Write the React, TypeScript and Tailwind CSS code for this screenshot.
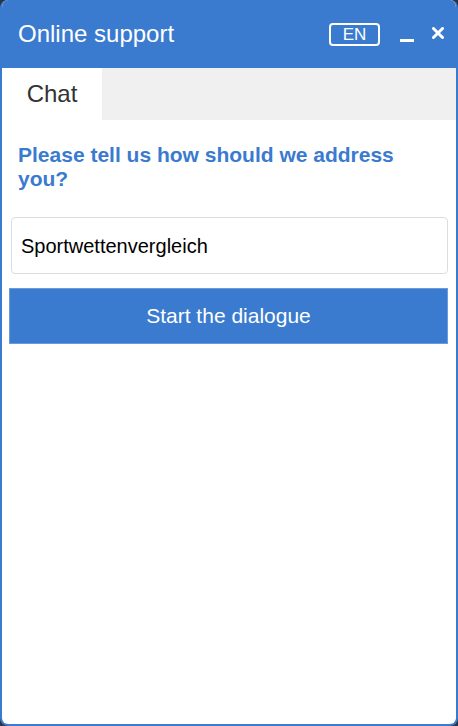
export default function App() {
  return (
    <div className="w-[458px] h-[726px] bg-[#2b3442]" style={{ fontFamily: '"Liberation Sans", Arial, sans-serif' }}>
      <div className="flex h-full flex-col overflow-hidden rounded-[8px] border-2 border-t-0 border-[#3a7bcf] bg-white">
        <div className="flex h-[68px] shrink-0 items-center bg-[#3a7bcf] pl-[16px] pr-[12px]">
          <span className="text-[24px] text-white">Online support</span>
          <span className="ml-auto flex h-[23px] w-[51px] items-center justify-center rounded-[4px] border-2 border-white text-[17px] leading-none text-white">
            EN
          </span>
          <span className="ml-[20px] mt-[12px] h-[3px] w-[14px] bg-white" />
          <svg className="ml-[18px] mb-[2px]" width="12" height="12" viewBox="0 0 12 12">
            <path d="M1.5 1.5 L10.5 10.5 M10.5 1.5 L1.5 10.5" stroke="white" strokeWidth="3" strokeLinecap="round" />
          </svg>
        </div>
        <div className="flex h-[52px] shrink-0 bg-[#f0f0f0]">
          <div className="flex w-[100px] items-center justify-center bg-white text-[24px] text-[#333]">Chat</div>
        </div>
        <div className="flex flex-col pl-[7px] pr-[8px] pt-[23px]">
          <p className="pl-[9px] pr-[20px] text-[21px] font-bold leading-[24px] text-[#3a7bcf]">
            Please tell us how should we address you?
          </p>
          <div className="mt-[26px] ml-[2px] flex h-[57px] items-center rounded-[4px] border border-[#dcdcdc] px-[9px] text-[20px] text-black">
            Sportwettenvergleich
          </div>
          <button className="mt-[14px] h-[56px] w-full border border-[#6a9cdc] bg-[#3a7bcf] text-[21px] text-white">
            Start the dialogue
          </button>
        </div>
      </div>
    </div>
  )
}
